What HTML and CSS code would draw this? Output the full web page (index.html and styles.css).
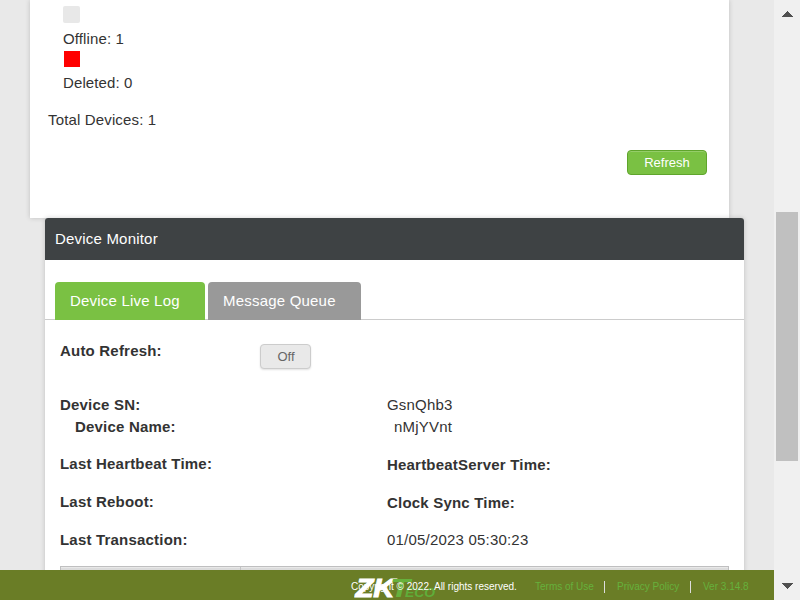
FILE: index.html
```html
<!DOCTYPE html>
<html lang="en">
<head>
<meta charset="utf-8">
<title>Device Monitor</title>
<link rel="stylesheet" href="styles.css">
</head>
<body>
<div class="viewport">
  <main class="page">
    <section class="card summary">
      <div class="legend">
        <span class="swatch offline"></span>
        <div>Offline: 1</div>
        <span class="swatch deleted"></span>
        <div>Deleted: 0</div>
      </div>
      <div class="total">Total Devices: 1</div>
      <button class="btn primary">Refresh</button>
    </section>
    <section class="card monitor">
      <h2>Device Monitor</h2>
      <nav class="tabs">
        <a class="tab active">Device Live Log</a>
        <a class="tab">Message Queue</a>
      </nav>
      <div class="auto">
        <b>Auto Refresh:</b>
        <button class="btn off">Off</button>
      </div>
      <div class="details">
        <div><b>Device SN:</b></div><div>GsnQhb3</div>
        <div class="indent"><b>Device Name:</b></div><div class="name">nMjYVnt</div>
        <div class="gap"><b>Last Heartbeat Time:</b></div><div class="gap low"><b>HeartbeatServer Time:</b></div>
        <div class="gap2"><b>Last Reboot:</b></div><div class="gap2 low"><b>Clock Sync Time:</b></div>
        <div class="gap2"><b>Last Transaction:</b></div><div class="gap2">01/05/2023 05:30:23</div>
      </div>
      <div class="log-head"><span></span><span></span></div>
    </section>
    <footer class="footer">
      <svg class="logo" width="90" height="24" viewBox="0 0 90 24">
        <g font-family="Liberation Sans, sans-serif" font-weight="bold" font-style="italic">
          <text x="1.5" y="20.6" font-size="25.5" textLength="39" lengthAdjust="spacingAndGlyphs" fill="#fff" stroke="#fff" stroke-width="1">ZK</text>
          <text x="36" y="20.8" font-size="26" textLength="20" lengthAdjust="spacingAndGlyphs" fill="#66b13c">T</text>
          <text x="51" y="20.8" font-size="12.5" textLength="30" lengthAdjust="spacingAndGlyphs" fill="#5fae3a">ECO</text>
        </g>
      </svg>
      <span class="copy">Copyright © 2022. All rights reserved.</span>
      <a class="terms">Terms of Use</a>
      <a class="privacy">Privacy Policy</a>
      <a class="version">Ver 3.14.8</a>
    </footer>
  </main>
  <aside class="scrollbar">
    <svg width="12" height="6" shape-rendering="crispEdges"><path d="M0 6L6 0L12 6Z"/></svg>
    <div class="thumb"></div>
    <svg width="12" height="6" shape-rendering="crispEdges"><path d="M0 0L6 6L12 0Z"/></svg>
  </aside>
</div>
</body>
</html>
```

FILE: styles.css
```css
* { box-sizing: border-box; }
body {
  margin: 0;
  font: 15px/22px "Liberation Sans", Arial, sans-serif;
  letter-spacing: 0.2px;
  color: #333;
  background: #e9e9e9;
}
.viewport { display: flex; width: 800px; height: 600px; overflow: hidden; }
.page { position: relative; width: 774px; height: 600px; overflow: hidden; }
.card { width: 699px; background: #fff; box-shadow: 0 0 5px rgba(0, 0, 0, 0.18); }
.summary {
  display: flex;
  flex-direction: column;
  height: 218px;
  margin-left: 30px;
  padding: 6px 22px 0 18px;
  letter-spacing: 0.15px;
}
.legend { padding-left: 15px; letter-spacing: 0.12px; }
.swatch { display: block; width: 17px; height: 17px; border-radius: 2px; }
.offline { background: #e8e8e8; margin-bottom: 5px; }
.deleted { background: #f00; height: 16px; width: 16px; margin: 1px 0 5px 1px; border-radius: 0; }
.total { margin-top: 15px; }
.btn {
  height: 25px;
  padding: 0;
  font: 13px/22px "Liberation Sans", Arial, sans-serif;
  border-radius: 4px;
}
.primary {
  align-self: flex-end;
  width: 80px;
  margin-top: 19px;
  color: #fff;
  background: #7ac143;
  border: 1px solid #5fa52c;
  box-shadow: inset 0 1px 0 #95cd69;
}
.monitor { position: relative; height: 420px; margin-left: 45px; border-radius: 3px; }
h2 {
  height: 42px;
  margin: 0;
  padding: 0 10px;
  font-size: 15px;
  font-weight: normal;
  line-height: 42px;
  color: #fff;
  background: #3e4244;
  border-radius: 3px 3px 0 0;
}
.tabs {
  display: flex;
  gap: 3px;
  height: 60px;
  padding: 22px 10px 0;
  background: linear-gradient(#ccc, #ccc) bottom / 100% 1px no-repeat;
}
.tab {
  width: 150px;
  height: 38px;
  padding-left: 15px;
  line-height: 38px;
  color: #fff;
  background: #999;
  border-radius: 4px 4px 0 0;
}
.tab + .tab { width: 153px; }
.tab.active { background: #7ac143; }
.auto { display: flex; height: 74px; padding: 20px 15px 0; }
.auto b { width: 200px; }
.off {
  width: 51px;
  margin-top: 4px;
  padding-left: 1px;
  color: #666;
  background: #e9e9e9;
  border: 1px solid #ccc;
  box-shadow: 0 1px 2px rgba(0, 0, 0, 0.12);
}
.details { display: grid; grid-template-columns: 327px 1fr; padding-left: 15px; }
.indent { padding-left: 15px; }
.name { padding-left: 7px; }
.gap { padding-top: 15px; }
.gap2 { padding-top: 16px; }
.low { position: relative; top: 1px; }
.log-head {
  display: grid;
  grid-template-columns: 179px 1fr;
  height: 30px;
  margin: 15px 15px 0;
  background: #dcdcdc;
  border: 1px solid #bfbfc0;
}
.log-head span { box-shadow: inset 0 1px 0 #e8e8e8; }
.log-head span + span { border-left: 1px solid #c4c4c5; }
.footer {
  position: absolute;
  inset: 570px 0 0;
  display: flex;
  align-items: center;
  height: 30px;
  padding: 4px 0 0 351px;
  background: #6a7d26;
  color: #66b13c;
  font-size: 10px;
  line-height: 12px;
  letter-spacing: 0;
  white-space: nowrap;
}
.logo { position: absolute; left: 354px; top: 6px; }
.copy { position: relative; width: 184px; color: #fff; }
.terms { width: 69.5px; height: 12px; border-right: 1px solid #ddd; }
.privacy { width: 74px; margin-left: 12.5px; border-right: 1px solid #ddd; }
.version { margin-left: 12px; }
.scrollbar {
  display: flex;
  flex-direction: column;
  justify-content: space-between;
  align-items: center;
  width: 26px;
  padding: 11px 2px;
  background: #f0f0f0;
  fill: #505050;
}
.thumb { width: 22px; height: 249px; margin-top: 73px; background: #c0c0c0; }
```
